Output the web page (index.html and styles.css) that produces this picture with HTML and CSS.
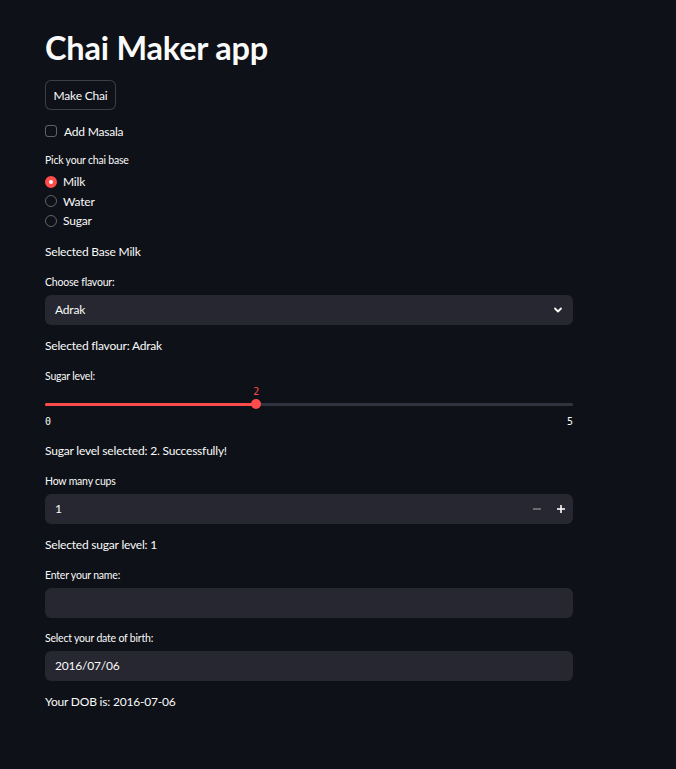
FILE: index.html
```html
<!DOCTYPE html>
<html lang="en">
<head>
<meta charset="utf-8">
<title>Chai Maker app</title>
<link rel="stylesheet" href="styles.css">
</head>
<body>
<main class="app">
  <h1 class="title">Chai Maker app</h1>

  <div class="el"><button class="btn">Make Chai</button></div>

  <label class="check">
    <span class="check-box"></span>
    <span class="check-label">Add Masala</span>
  </label>

  <div class="el">
    <div class="wlabel">Pick your chai base</div>
    <div class="radios">
      <div class="radio"><span class="dot on"></span><span>Milk</span></div>
      <div class="radio"><span class="dot"></span><span>Water</span></div>
      <div class="radio"><span class="dot"></span><span>Sugar</span></div>
    </div>
  </div>

  <p class="text">Selected Base Milk</p>

  <div class="el">
    <div class="wlabel">Choose flavour:</div>
    <div class="field select">
      <span class="value">Adrak</span>
      <svg class="chev" width="10" height="10" viewBox="0 0 10 10"><path d="M2 3.5 L5 6.5 L8 3.5" fill="none" stroke="#fafafa" stroke-width="1.8" stroke-linecap="round" stroke-linejoin="round"/></svg>
    </div>
  </div>

  <p class="text">Selected flavour: Adrak</p>

  <div class="el">
    <div class="wlabel">Sugar level:</div>
    <div class="slider">
      <div class="track-wrap">
        <div class="track"><div class="fill" style="width:40%"></div></div>
        <div class="thumb" style="left:40%"><span class="thumb-val">2</span></div>
      </div>
      <div class="ticks"><span>0</span><span>5</span></div>
    </div>
  </div>

  <p class="text">Sugar level selected: 2. Successfully!</p>

  <div class="el">
    <div class="wlabel">How many cups</div>
    <div class="field number">
      <span class="value">1</span>
      <div class="steps">
        <span class="step disabled"><svg width="10" height="10" viewBox="0 0 10 10"><rect x="1" y="4.2" width="8" height="1.6" fill="currentColor"/></svg></span>
        <span class="step"><svg width="10" height="10" viewBox="0 0 10 10"><rect x="1" y="4.2" width="8" height="1.6" fill="currentColor"/><rect x="4.2" y="1" width="1.6" height="8" fill="currentColor"/></svg></span>
      </div>
    </div>
  </div>

  <p class="text">Selected sugar level: 1</p>

  <div class="el">
    <div class="wlabel">Enter your name:</div>
    <div class="field"></div>
  </div>

  <div class="el">
    <div class="wlabel">Select your date of birth:</div>
    <div class="field"><span class="value">2016/07/06</span></div>
  </div>

  <p class="text">Your DOB is: 2016-07-06</p>
</main>
</body>
</html>
```

FILE: styles.css
```css
* { box-sizing: border-box; }
html, body { margin: 0; padding: 0; }
body {
  background: #0e1117;
  color: #fafafa;
  font-family: Lato, "Open Sans", sans-serif;
  font-size: 12px;
  letter-spacing: -0.2px;
  height: 769px;
}
.app {
  width: 528px;
  margin-left: 45px;
  padding-top: 27px;
  display: flex;
  flex-direction: column;
  gap: 12px;
}
.title {
  margin: 0;
  font-size: 32.5px;
  font-weight: 700;
  line-height: 41px;
  height: 41px;
  letter-spacing: -0.2px;
}
.el { display: flex; flex-direction: column; }
.btn {
  align-self: flex-start;
  height: 30px;
  width: 71px;
  padding: 0;
  background: #0e1117;
  color: #fafafa;
  border: 1px solid rgba(250,250,250,0.2);
  border-radius: 6px;
  font: inherit;
  font-size: 12px;
  letter-spacing: -0.2px;
}
.check {
  display: flex;
  align-items: center;
  height: 18px;
  gap: 7px;
}
.check-box {
  width: 12px;
  height: 12px;
  border: 1px solid rgba(250,250,250,0.35);
  border-radius: 3px;
}
.wlabel {
  font-size: 10.5px;
  height: 18px;
  line-height: 16px;
  margin-bottom: 3px;
}
.radios { display: flex; flex-direction: column; margin-top: -1px; }
.radio {
  display: flex;
  align-items: center;
  height: 19.5px;
  gap: 6px;
}
.dot {
  width: 12px;
  height: 12px;
  border-radius: 50%;
  border: 1px solid rgba(250,250,250,0.35);
}
.dot.on {
  border: 4px solid #ff4b4b;
  background: #fafafa;
}
.text {
  margin: 0;
  height: 19px;
  line-height: 17px;
}
.field {
  height: 30px;
  background: #262730;
  border-radius: 6px;
  display: flex;
  align-items: center;
  padding-left: 10px;
}
.field .value { flex: 1; }
.chev { margin-right: 10px; }
.steps { display: flex; height: 100%; }
.step {
  width: 24px;
  display: flex;
  align-items: center;
  justify-content: center;
  color: #fafafa;
}
.step.disabled { color: rgba(250,250,250,0.4); }
.slider { height: 41px; display: flex; flex-direction: column; }
.track-wrap {
  position: relative;
  height: 26px;
  padding-top: 14px;
}
.track {
  height: 3px;
  background: #31333f;
  border-radius: 2px;
}
.fill { height: 100%; background: #ff4b4b; border-radius: 2px; }
.thumb {
  position: absolute;
  top: 10.5px;
  width: 10px;
  height: 10px;
  margin-left: -5px;
  border-radius: 50%;
  background: #ff4b4b;
}
.thumb-val {
  position: absolute;
  left: 50%;
  bottom: 100%;
  transform: translateX(-50%);
  margin-bottom: 1px;
  color: #ff4b4b;
  font-family: "DejaVu Sans Mono", monospace;
  font-size: 10px;
  line-height: 12px;
  letter-spacing: 0;
}
.ticks {
  height: 14px;
  display: flex;
  justify-content: space-between;
  align-items: center;
  font-family: "DejaVu Sans Mono", monospace;
  font-size: 10px;
  letter-spacing: 0;
}
```
